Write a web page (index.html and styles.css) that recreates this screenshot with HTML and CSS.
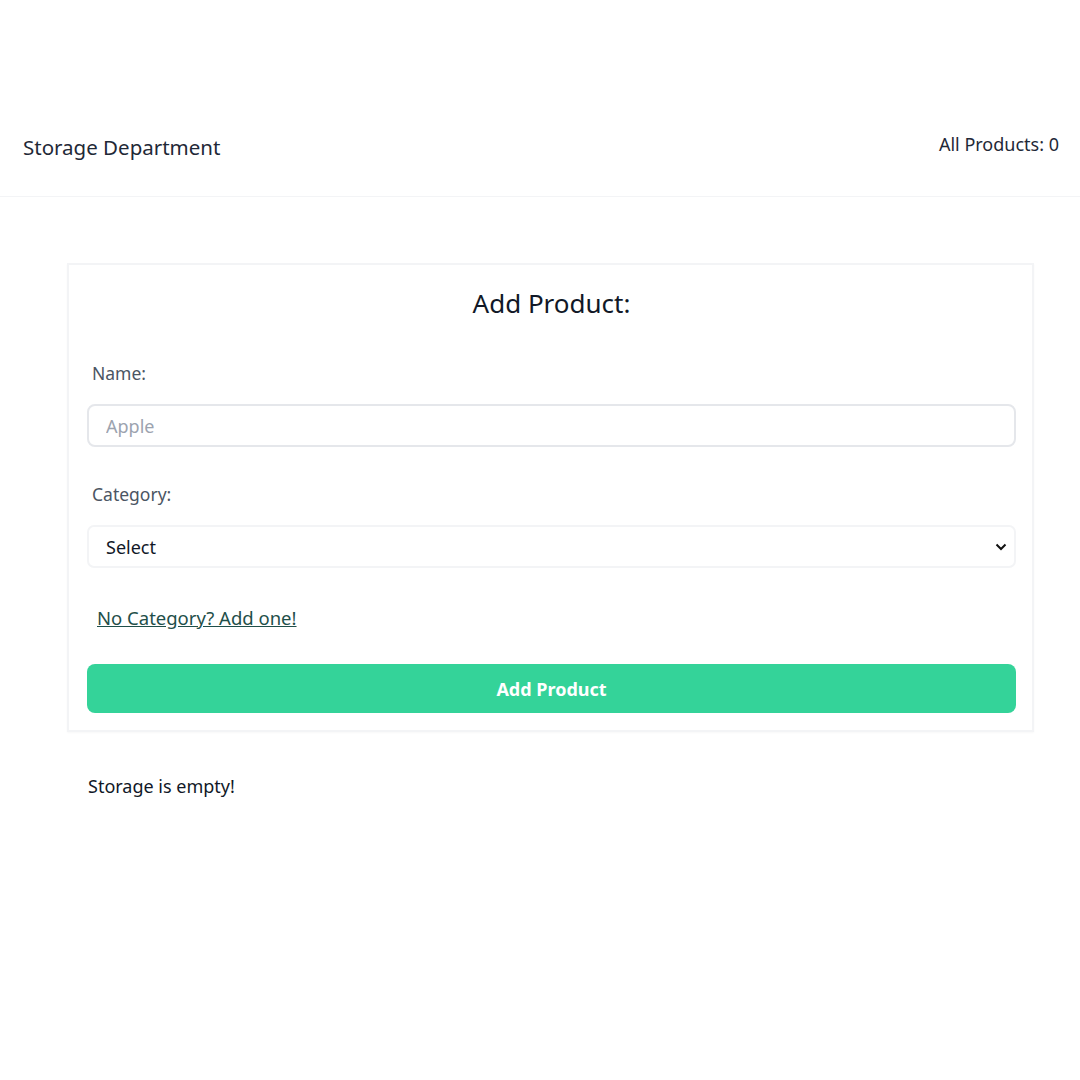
FILE: index.html
```html
<!DOCTYPE html>
<html lang="en">
<head>
<meta charset="utf-8">
<title>Storage Department</title>
<link rel="stylesheet" href="styles.css">
</head>
<body>
<div class="page">
  <header class="topbar">
    <h1 class="brand">Storage Department</h1>
    <div class="count">All Products: 0</div>
  </header>
  <main class="main">
    <form class="card" onsubmit="return false">
      <h2 class="card-title">Add Product:</h2>
      <label class="label" for="name">Name:</label>
      <input class="input" id="name" type="text" placeholder="Apple">
      <label class="label label-gap" for="cat">Category:</label>
      <div class="select-wrap">
        <select class="select" id="cat">
          <option>Select</option>
        </select>
        <svg class="chev" width="12" height="8" viewBox="0 0 12 8"><path d="M1.5 1.5 L6 6 L10.5 1.5" fill="none" stroke="#111" stroke-width="2"/></svg>
      </div>
      <a class="link" href="#">No Category? Add one!</a>
      <button class="btn" type="button">Add Product</button>
    </form>
    <p class="empty">Storage is empty!</p>
  </main>
</div>
</body>
</html>
```
FILE: styles.css
```css
* { box-sizing: border-box; }
html, body { margin: 0; padding: 0; background: #fff; }
body {
  font-family: "Noto Sans", "Open Sans", sans-serif;
  color: #1f2937;
}
.page { padding-top: 100px; }
.topbar {
  display: flex;
  justify-content: space-between;
  align-items: center;
  height: 97px;
  padding: 0 21px 0 23px;
  border-bottom: 1px solid #f3f4f6;
}
.brand {
  margin: 0;
  font-size: 20.5px;
  line-height: 28px;
  font-weight: 400;
  color: #1f2937;
  padding-bottom: 3px;
}
.count {
  font-size: 18px;
  line-height: 26px;
  color: #1f2937;
  padding-bottom: 9px;
}
.main { padding: 66px 46px 0 67px; }
.card {
  display: flex;
  flex-direction: column;
  border: 2px solid #f3f4f6;
  box-shadow: 0 1px 2px rgba(0,0,0,0.03);
  padding: 20px 16px 17px 18px;
}
.card-title {
  margin: 0 0 40px;
  text-align: center;
  font-size: 26px;
  line-height: 36px;
  font-weight: 400;
  color: #111827;
}
.label {
  font-size: 17.5px;
  line-height: 24px;
  color: #4b5563;
  padding-left: 5px;
  margin-bottom: 19px;
}
.label-gap { margin-top: 35px; }
.input {
  height: 43px;
  border: 2px solid #e5e7eb;
  border-radius: 8px;
  padding: 0 17px;
  font: inherit;
  font-size: 18px;
  color: #111827;
  outline: none;
}
.input::placeholder { color: #9ca3af; }
.select-wrap { position: relative; margin-bottom: 37px; }
.select {
  display: block;
  width: 100%;
  height: 43px;
  appearance: none;
  -webkit-appearance: none;
  background: #fff;
  border: 2px solid #f3f4f6;
  border-radius: 7px;
  padding: 0 17px;
  font: inherit;
  font-size: 18px;
  color: #111827;
}
.chev { position: absolute; right: 9px; top: 18px; pointer-events: none; }
.link {
  align-self: flex-start;
  margin-left: 10px;
  font-size: 18.5px;
  line-height: 25px;
  color: #1f4f4a;
  text-decoration: underline;
  margin-bottom: 34px;
}
.btn {
  height: 49px;
  border: none;
  border-radius: 8px;
  background: #34d399;
  color: #fff;
  font: inherit;
  font-size: 18px;
  font-weight: 700;
}
.empty {
  margin: 42px 0 0 21px;
  font-size: 18px;
  line-height: 25px;
  color: #111827;
}
```
